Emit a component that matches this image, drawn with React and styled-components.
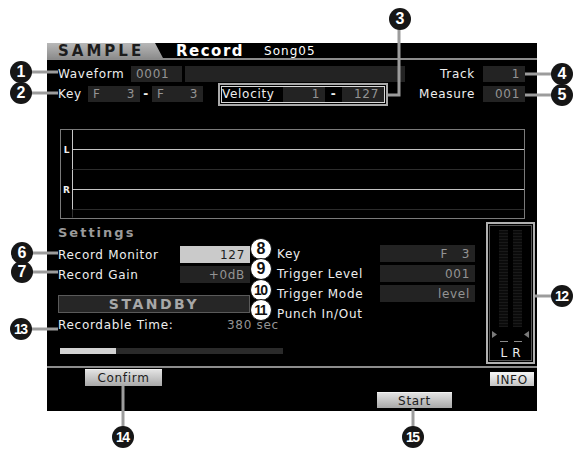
import React from 'react'
import styled, { createGlobalStyle } from 'styled-components'

const GlobalStyle = createGlobalStyle`
  body {
    margin: 0;
    background: #fff;
  }
`

const Page = styled.div`
  position: relative;
  width: 582px;
  height: 451px;
  padding: 43px 0 0 47px;
  box-sizing: border-box;
  background: #fff;
  overflow: hidden;
`
const Screen = styled.div`
  width: 490px;
  height: 368px;
  background: #000;
  display: flex;
  flex-direction: column;
  font-family: "DejaVu Sans", sans-serif;
  font-size: 12px;
  letter-spacing: 0.7px;
  color: #eee;
`
const TitleBar = styled.div`
  height: 15px;
  flex-shrink: 0;
  display: flex;
  align-items: center;
  border-bottom: 2px solid #8c8c8c;
`
const ModeTab = styled.div`
  width: 116px;
  height: 100%;
  box-sizing: border-box;
  padding-left: 11px;
  display: flex;
  align-items: center;
  background: linear-gradient(#b8b8b8, #8e8e8e);
  clip-path: polygon(0 0, 108px 0, 116px 100%, 0 100%);
  color: #1c1c1c;
  font-weight: bold;
  font-size: 15px;
  letter-spacing: 3px;
`
const PageName = styled.span`
  margin-left: 13px;
  font-weight: bold;
  font-size: 15px;
  letter-spacing: 1.5px;
  color: #fff;
`
const SongName = styled.span`
  margin-left: 20px;
  font-size: 12px;
  letter-spacing: 1px;
  color: #fff;
`
const Rows = styled.div`
  display: flex;
  flex-direction: column;
  gap: 4px;
  padding: 6px 12px 0 11px;
`
const Row = styled.div`
  display: flex;
  align-items: center;
  height: ${p => p.$h || 16}px;
  white-space: nowrap;
`
const Label = styled.span`
  flex: ${p => (p.$grow ? 1 : 'none')};
  width: ${p => (p.$w ? `${p.$w}px` : 'auto')};
  padding-right: ${p => (p.$right ? 8 : 0)}px;
  text-align: ${p => (p.$right ? 'right' : 'left')};
  white-space: nowrap;
`
const Field = styled.div`
  flex: none;
  width: ${p => p.$w}px;
  height: ${p => p.$h || 16}px;
  margin-left: ${p => p.$ml || 0}px;
  box-sizing: border-box;
  padding: 0 5px;
  display: flex;
  align-items: center;
  justify-content: ${p => p.$justify || 'flex-end'};
  background: ${p => (p.$light ? '#cacaca' : '#232323')};
  color: ${p => (p.$light ? '#1e1e1e' : '#949494')};
  white-space: nowrap;
`
const Dash = styled.span`
  width: ${p => p.$w}px;
  text-align: center;
  color: #eee;
  font-weight: bold;
`
const VelocityBox = styled.div`
  width: 170px;
  height: 23px;
  margin-left: 15px;
  box-sizing: border-box;
  border: 2px solid #a9a9a9;
  padding: 1px 2px;
  display: flex;
  align-items: center;
  background: #000;
  box-shadow: inset 0 0 0 1px #000, inset 0 0 0 2px #d8d8d8;
`
const WaveBox = styled.div`
  margin: 27px 12px 0 13px;
  border: 1px solid #7a7a7a;
  display: grid;
  grid-template-columns: 12px 1fr;
  grid-template-rows: 40px 40px 8px;
`
const Gutter = styled.div`
  border-right: 1px solid ${p => (p.$dim ? '#333' : '#c8c8c8')};
  border-bottom: 1px solid ${p => (p.$last ? 'transparent' : '#000')};
  display: flex;
  align-items: center;
  justify-content: center;
  font-size: 9px;
  font-weight: bold;
  letter-spacing: 0;
  color: #eee;
`
const Channel = styled.div`
  border-bottom: 1px solid ${p => (p.$last ? 'transparent' : '#2c2c2c')};
  background: ${p =>
    p.$line ? 'linear-gradient(#c4c4c4, #c4c4c4) center / 100% 1px no-repeat' : 'none'};
`
const Settings = styled.div`
  flex: 1;
  display: flex;
  align-items: flex-start;
  padding: 3px 0 0 11px;
  min-height: 0;
`
const Column = styled.div`
  width: ${p => p.$w}px;
  margin-left: ${p => p.$ml || 0}px;
  display: flex;
  flex-direction: column;
  gap: 3px;
  padding-top: ${p => p.$pt || 0}px;
`
const Heading = styled.div`
  height: 20px;
  line-height: 20px;
  margin-top: 1px;
  font-weight: bold;
  font-size: 13px;
  letter-spacing: 2px;
  color: #9a9a9a;
`
const StandbyBar = styled.div`
  height: 18px;
  margin-top: 9px;
  box-sizing: border-box;
  border: 1px solid #5a5a5a;
  background: #262626;
  display: flex;
  align-items: center;
  justify-content: center;
  font-weight: bold;
  font-size: 14px;
  letter-spacing: 2.5px;
  color: #a8a8a8;
`
const TimeValue = styled.span`
  color: #949494;
  white-space: nowrap;
`
const Progress = styled.div`
  width: 223px;
  height: 6px;
  margin: 12px 0 0 2px;
  background: #2a2a2a;
`
const ProgressFill = styled.div`
  height: 100%;
  background: #d2d2d2;
`
const Meter = styled.div`
  width: 49px;
  height: 142px;
  margin-left: 11px;
  flex: none;
  box-sizing: border-box;
  border: 2px solid #b2b2b2;
  box-shadow: inset 0 0 0 1px #000, inset 0 0 0 2px #555;
  display: flex;
  flex-direction: column;
  align-items: center;
  padding-top: 6px;
`
const Bars = styled.div`
  display: flex;
  gap: 5px;
  height: 97px;
`
const Bar = styled.div`
  width: 9px;
  background: repeating-linear-gradient(#191919 0 1px, #0b0b0b 1px 3px);
`
const Markers = styled.div`
  width: 100%;
  box-sizing: border-box;
  padding: 0 4px;
  height: 10px;
  margin-top: 2px;
  display: flex;
  justify-content: space-between;
  align-items: center;
`
const Ticks = styled.div`
  display: flex;
  gap: 6px;
  height: 5px;
  align-items: center;
`
const Tick = styled.span`
  width: 8px;
  height: 1px;
  background: #8a8a8a;
`
const MeterLabels = styled.div`
  margin-top: 2px;
  display: flex;
  gap: 5px;
  font-size: 12px;
  letter-spacing: 0;
  color: #eee;
`
const Footer = styled.div`
  height: 45px;
  flex-shrink: 0;
  border-top: 2px solid #8c8c8c;
  box-sizing: border-box;
  display: flex;
  flex-direction: column;
`
const SubRow = styled.div`
  display: flex;
  align-items: flex-start;
  height: 18px;
  padding: 1px 3px 0 38px;
`
const FuncRow = styled.div`
  display: grid;
  grid-template-columns: repeat(6, 1fr);
  margin-top: 5px;
`
const Key = styled.div`
  width: ${p => (p.$w ? `${p.$w}px` : 'auto')};
  height: ${p => p.$h || 17}px;
  margin: ${p => p.$m || 0};
  grid-column: ${p => p.$col || 'auto'};
  box-sizing: border-box;
  border-top: 1px solid #f2f2f2;
  background: linear-gradient(#e2e2e2, #a8a8a8);
  color: #1c1c1c;
  display: flex;
  align-items: center;
  justify-content: center;
  font-size: 12px;
`
const InfoKey = styled(Key)`
  margin-left: auto;
  margin-top: 3px;
  background: linear-gradient(#f4f4f4, #c4c4c4);
`
const Leaders = styled.svg`
  position: absolute;
  left: 0;
  top: 0;
  pointer-events: none;
`
const Callout = styled.div`
  position: absolute;
  left: ${p => p.$x - 11}px;
  top: ${p => p.$y - 11}px;
  width: 22px;
  height: 22px;
  box-sizing: border-box;
  border-radius: 50%;
  border: ${p => (p.$light ? '1.5px solid #111' : 'none')};
  background: ${p => (p.$light ? '#fff' : '#161616')};
  color: ${p => (p.$light ? '#111' : '#fff')};
  display: flex;
  align-items: center;
  justify-content: center;
  font-family: "Liberation Sans", Arial, sans-serif;
  font-weight: bold;
  font-size: ${p => (p.$n > 9 ? 14 : 16)}px;
  letter-spacing: ${p => (p.$n > 9 ? -1.5 : 0)}px;
  padding-right: ${p => (p.$n > 9 ? 1.5 : 0)}px;
`

const callouts = [
  { n: 1, x: 21, y: 72 },
  { n: 2, x: 21, y: 93 },
  { n: 3, x: 400, y: 19 },
  { n: 4, x: 562, y: 74 },
  { n: 5, x: 562, y: 95 },
  { n: 6, x: 22, y: 253 },
  { n: 7, x: 22, y: 272 },
  { n: 8, x: 261, y: 249, light: true },
  { n: 9, x: 261, y: 269, light: true },
  { n: 10, x: 261, y: 290, light: true },
  { n: 11, x: 261, y: 310, light: true },
  { n: 12, x: 562, y: 296 },
  { n: 13, x: 21, y: 329 },
  { n: 14, x: 123, y: 437 },
  { n: 15, x: 413, y: 437 },
]

const leaderLines = [
  '31,72 58,72',
  '31,93 58,93',
  '399,29 399,95 388,95',
  '525,74 552,74',
  '525,95 552,95',
  '32,253 58,253',
  '32,272 58,272',
  '31,329 58,329',
  '535,296 552,296',
  '123,386 123,427',
  '413,409 413,427',
]

function App() {
  return (
    <Page>
      <GlobalStyle />
      <Screen>
        <TitleBar>
          <ModeTab>SAMPLE</ModeTab>
          <PageName>Record</PageName>
          <SongName>Song05</SongName>
        </TitleBar>

        <Rows>
          <Row>
            <Label $w={73}>Waveform</Label>
            <Field $w={51} $justify="flex-start">0001</Field>
            <Field $w={220} $ml={3} />
            <Label $grow $right>Track</Label>
            <Field $w={42}>1</Field>
          </Row>
          <Row>
            <Label $w={30}>Key</Label>
            <Field $w={52} $justify="space-between"><span>F</span><span>3</span></Field>
            <Dash $w={12}>-</Dash>
            <Field $w={51} $justify="space-between"><span>F</span><span>3</span></Field>
            <VelocityBox>
              <Label $w={61}>Velocity</Label>
              <Field $w={42} $h={15}>1</Field>
              <Dash $w={17}>-</Dash>
              <Field $w={42} $h={15}>127</Field>
            </VelocityBox>
            <Label $grow $right>Measure</Label>
            <Field $w={42}>001</Field>
          </Row>
        </Rows>

        <WaveBox>
          <Gutter>L</Gutter>
          <Channel $line />
          <Gutter>R</Gutter>
          <Channel $line />
          <Gutter $dim $last />
          <Channel $last />
        </WaveBox>

        <Settings>
          <Column $w={192}>
            <Heading>Settings</Heading>
            <Row $h={17}>
              <Label $w={122}>Record Monitor</Label>
              <Field $w={70} $h={17} $light>127</Field>
            </Row>
            <Row $h={17}>
              <Label $w={122}>Record Gain</Label>
              <Field $w={70} $h={17}>+0dB</Field>
            </Row>
            <StandbyBar>STANDBY</StandbyBar>
            <Row $h={17}>
              <Label $w={169}>Recordable Time:</Label>
              <TimeValue>380 sec</TimeValue>
            </Row>
            <Progress>
              <ProgressFill style={{ width: `${(56 / 223) * 100}%` }} />
            </Progress>
          </Column>

          <Column $w={198} $ml={27} $pt={23}>
            <Row $h={17}>
              <Label $w={103}>Key</Label>
              <Field $w={95} $h={17}>F&nbsp;&nbsp;&nbsp;3</Field>
            </Row>
            <Row $h={17}>
              <Label $w={103}>Trigger Level</Label>
              <Field $w={95} $h={17}>001</Field>
            </Row>
            <Row $h={17}>
              <Label $w={103}>Trigger Mode</Label>
              <Field $w={95} $h={17}>level</Field>
            </Row>
            <Row $h={17}>
              <Label>Punch In/Out</Label>
            </Row>
          </Column>

          <Meter>
            <Bars>
              <Bar />
              <Bar />
            </Bars>
            <Markers>
              <svg width="5" height="7" viewBox="0 0 5 7"><path d="M0 0 L5 3.5 L0 7 Z" fill="#7a7a7a" /></svg>
              <svg width="5" height="7" viewBox="0 0 5 7"><path d="M5 0 L0 3.5 L5 7 Z" fill="#7a7a7a" /></svg>
            </Markers>
            <Ticks>
              <Tick />
              <Tick />
            </Ticks>
            <MeterLabels>
              <span>L</span>
              <span>R</span>
            </MeterLabels>
          </Meter>
        </Settings>

        <Footer>
          <SubRow>
            <Key $w={77}>Confirm</Key>
            <InfoKey $w={44} $h={14}>INFO</InfoKey>
          </SubRow>
          <FuncRow>
            <Key $col={5} $h={16} $m="0 3px">Start</Key>
          </FuncRow>
        </Footer>
      </Screen>

      <Leaders width="582" height="451" viewBox="0 0 582 451">
        {leaderLines.map(points => (
          <polyline key={points} points={points} fill="none" stroke="#9c9c9c" strokeWidth="3" />
        ))}
      </Leaders>

      {callouts.map(c => (
        <Callout key={c.n} $n={c.n} $x={c.x} $y={c.y} $light={c.light}>
          {c.n}
        </Callout>
      ))}
    </Page>
  )
}

export default App
